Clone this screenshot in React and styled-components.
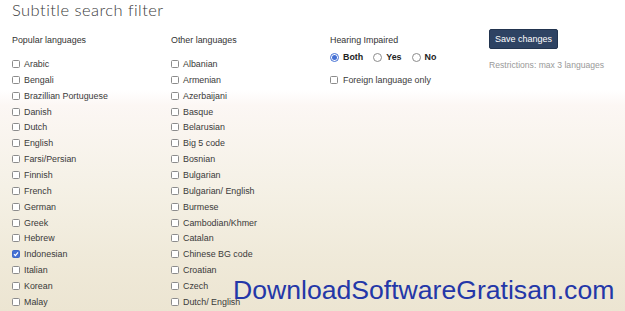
import React from "react";
import styled, { createGlobalStyle } from "styled-components";

const GlobalStyle = createGlobalStyle`
  html, body {
    margin: 0;
    padding: 0;
  }
  body {
    font-family: "Liberation Sans", Arial, sans-serif;
    color: #333;
  }
`;

const Page = styled.div`
  position: relative;
  width: 625px;
  height: 311px;
  overflow: hidden;
  box-sizing: border-box;
  padding: 0 12px;
  background: linear-gradient(
    180deg,
    #ffffff 0%,
    #ffffff 29%,
    #fcf7f4 34%,
    #f5f1e6 60%,
    #efe9d8 85%,
    #ece5d2 100%
  );
`;

const Title = styled.h1`
  margin: 0;
  padding-top: 1px;
  font-family: "Lato", "Open Sans", sans-serif;
  font-weight: 300;
  font-size: 16.5px;
  line-height: 19px;
  letter-spacing: 0.45px;
  color: #3a3a3a;
`;

const Columns = styled.div`
  display: grid;
  grid-template-columns: 159px 159px 159px 1fr;
  margin-top: 14px;
`;

const Column = styled.div`
  display: flex;
  flex-direction: column;
`;

const Heading = styled.div`
  font-size: 8.9px;
  line-height: 12px;
  color: #333;
  margin-bottom: ${({ $gap }) => $gap}px;
`;

const List = styled.div`
  display: flex;
  flex-direction: column;
`;

const Row = styled.label`
  display: flex;
  align-items: center;
  height: 15.87px;
  font-size: 8.9px;
  color: #3a3a3a;
  gap: 4px;
`;

const Box = styled.span`
  display: inline-flex;
  align-items: center;
  justify-content: center;
  width: 8px;
  height: 8px;
  box-sizing: border-box;
  border: 1px solid ${({ $checked }) => ($checked ? "#3d67c7" : "#8c8c8c")};
  border-radius: 1.5px;
  background: ${({ $checked }) => ($checked ? "#4470d4" : "#fff")};
  flex: none;
`;

const RadioRow = styled.div`
  display: flex;
  align-items: center;
  height: 14px;
  margin-top: 2px;
  font-size: 8.9px;
`;

const RadioOption = styled.label`
  display: flex;
  align-items: center;
  gap: 4px;
  margin-right: 10px;
  font-weight: bold;
  color: #222;
`;

const Circle = styled.span`
  display: inline-flex;
  align-items: center;
  justify-content: center;
  width: 9px;
  height: 9px;
  box-sizing: border-box;
  border-radius: 50%;
  border: 1px solid ${({ $checked }) => ($checked ? "#4470d4" : "#8c8c8c")};
  background: #fff;
  flex: none;
  &::after {
    content: "";
    display: ${({ $checked }) => ($checked ? "block" : "none")};
    width: 5px;
    height: 5px;
    border-radius: 50%;
    background: #4470d4;
  }
`;

const ForeignRow = styled(Row)`
  margin-top: 8px;
  gap: 5px;
`;

const SaveButton = styled.button`
  align-self: flex-start;
  width: 69px;
  height: 20px;
  margin-top: -5px;
  padding: 0;
  border: 1px solid #22344f;
  border-radius: 2px;
  background: #2e4363;
  color: #fff;
  font-family: "Liberation Sans", Arial, sans-serif;
  font-size: 9px;
`;

const Note = styled.div`
  margin-top: 11px;
  font-size: 8.6px;
  color: #999;
`;

const Watermark = styled.div`
  position: absolute;
  left: 233px;
  top: 275px;
  font-family: "Liberation Sans", Arial, sans-serif;
  font-size: 26.6px;
  line-height: 30px;
  color: #2437a8;
  white-space: nowrap;
`;

const Check = () => (
  <svg width="6" height="6" viewBox="0 0 6 6">
    <path d="M1 3.2 L2.4 4.6 L5 1.4" stroke="#fff" strokeWidth="1.2" fill="none" />
  </svg>
);

const popular = [
  "Arabic",
  "Bengali",
  "Brazillian Portuguese",
  "Danish",
  "Dutch",
  "English",
  "Farsi/Persian",
  "Finnish",
  "French",
  "German",
  "Greek",
  "Hebrew",
  "Indonesian",
  "Italian",
  "Korean",
  "Malay",
];

const other = [
  "Albanian",
  "Armenian",
  "Azerbaijani",
  "Basque",
  "Belarusian",
  "Big 5 code",
  "Bosnian",
  "Bulgarian",
  "Bulgarian/ English",
  "Burmese",
  "Cambodian/Khmer",
  "Catalan",
  "Chinese BG code",
  "Croatian",
  "Czech",
  "Dutch/ English",
];

const Checkbox = ({ checked }) => <Box $checked={checked}>{checked && <Check />}</Box>;

const LanguageList = ({ items, checked = [] }) => (
  <List>
    {items.map((name) => (
      <Row key={name}>
        <Checkbox checked={checked.includes(name)} />
        {name}
      </Row>
    ))}
  </List>
);

export default function App() {
  return (
    <>
      <GlobalStyle />
      <Page>
        <Title>Subtitle search filter</Title>
        <Columns>
          <Column>
            <Heading $gap={10}>Popular languages</Heading>
            <LanguageList items={popular} checked={["Indonesian"]} />
          </Column>
          <Column>
            <Heading $gap={10}>Other languages</Heading>
            <LanguageList items={other} />
          </Column>
          <Column>
            <Heading $gap={2}>Hearing Impaired</Heading>
            <RadioRow>
              <RadioOption>
                <Circle $checked />
                Both
              </RadioOption>
              <RadioOption>
                <Circle />
                Yes
              </RadioOption>
              <RadioOption>
                <Circle />
                No
              </RadioOption>
            </RadioRow>
            <ForeignRow>
              <Checkbox />
              Foreign language only
            </ForeignRow>
          </Column>
          <Column>
            <SaveButton>Save changes</SaveButton>
            <Note>Restrictions: max 3 languages</Note>
          </Column>
        </Columns>
        <Watermark>DownloadSoftwareGratisan.com</Watermark>
      </Page>
    </>
  );
}
